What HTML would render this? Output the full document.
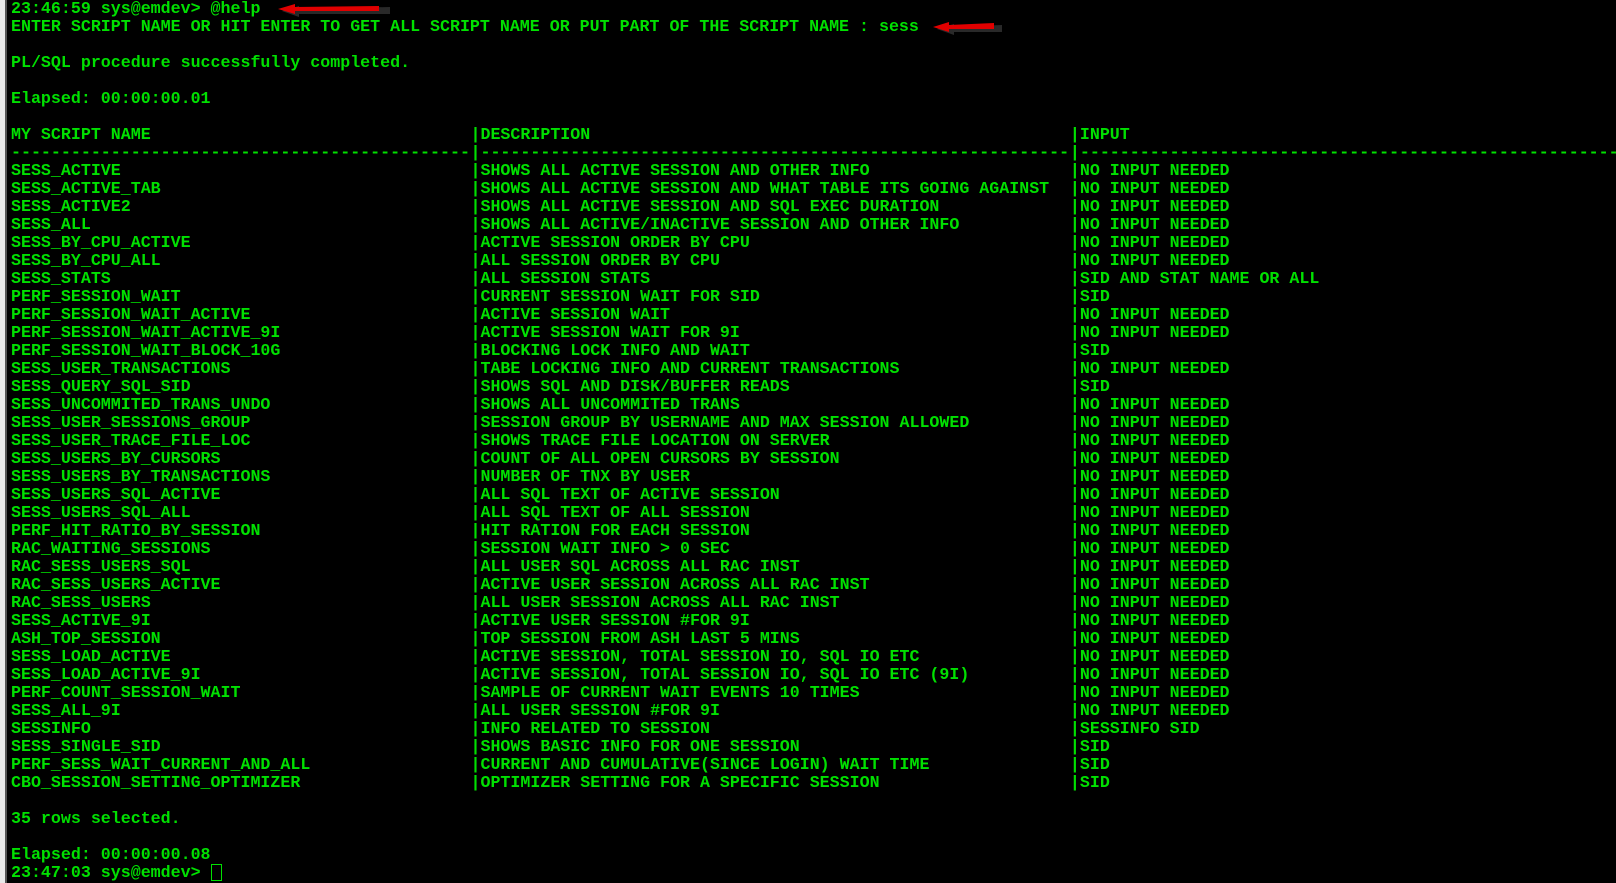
<!DOCTYPE html>
<html><head><meta charset="utf-8"><style>
html,body{margin:0;padding:0;background:#000;width:1616px;height:883px;overflow:hidden}
.strip{position:absolute;left:0;top:0;width:5px;height:883px;background:#e8e8e8}
.strip2{position:absolute;left:5px;top:0;width:2px;height:883px;background:#555}
.t{position:absolute;left:11px;top:0;width:1605px;font-family:"Liberation Mono",monospace;font-weight:bold;font-size:16.64px;line-height:18px;color:#00e000}
.l{position:relative;height:18px;white-space:pre}
.l span{position:absolute;top:0}
.a{left:0}.b{left:459.5px}.c{left:1058.9px}
</style></head><body>
<div class="strip"></div><div class="strip2"></div>
<div class="t" id="t"><div class="l">23:46:59 sys@emdev&gt; @help</div><div class="l">ENTER SCRIPT NAME OR HIT ENTER TO GET ALL SCRIPT NAME OR PUT PART OF THE SCRIPT NAME : sess</div><div class="l"></div><div class="l">PL/SQL procedure successfully completed.</div><div class="l"></div><div class="l">Elapsed: 00:00:00.01</div><div class="l"></div><div class="l"><span class="a">MY SCRIPT NAME</span><span class="b">|DESCRIPTION</span><span class="c">|INPUT</span></div><div class="l"><span class="a">----------------------------------------------</span><span class="b">|-----------------------------------------------------------</span><span class="c">|-----------------------------------------------------------</span></div><div class="l"><span class="a">SESS_ACTIVE</span><span class="b">|SHOWS ALL ACTIVE SESSION AND OTHER INFO</span><span class="c">|NO INPUT NEEDED</span></div><div class="l"><span class="a">SESS_ACTIVE_TAB</span><span class="b">|SHOWS ALL ACTIVE SESSION AND WHAT TABLE ITS GOING AGAINST</span><span class="c">|NO INPUT NEEDED</span></div><div class="l"><span class="a">SESS_ACTIVE2</span><span class="b">|SHOWS ALL ACTIVE SESSION AND SQL EXEC DURATION</span><span class="c">|NO INPUT NEEDED</span></div><div class="l"><span class="a">SESS_ALL</span><span class="b">|SHOWS ALL ACTIVE/INACTIVE SESSION AND OTHER INFO</span><span class="c">|NO INPUT NEEDED</span></div><div class="l"><span class="a">SESS_BY_CPU_ACTIVE</span><span class="b">|ACTIVE SESSION ORDER BY CPU</span><span class="c">|NO INPUT NEEDED</span></div><div class="l"><span class="a">SESS_BY_CPU_ALL</span><span class="b">|ALL SESSION ORDER BY CPU</span><span class="c">|NO INPUT NEEDED</span></div><div class="l"><span class="a">SESS_STATS</span><span class="b">|ALL SESSION STATS</span><span class="c">|SID AND STAT NAME OR ALL</span></div><div class="l"><span class="a">PERF_SESSION_WAIT</span><span class="b">|CURRENT SESSION WAIT FOR SID</span><span class="c">|SID</span></div><div class="l"><span class="a">PERF_SESSION_WAIT_ACTIVE</span><span class="b">|ACTIVE SESSION WAIT</span><span class="c">|NO INPUT NEEDED</span></div><div class="l"><span class="a">PERF_SESSION_WAIT_ACTIVE_9I</span><span class="b">|ACTIVE SESSION WAIT FOR 9I</span><span class="c">|NO INPUT NEEDED</span></div><div class="l"><span class="a">PERF_SESSION_WAIT_BLOCK_10G</span><span class="b">|BLOCKING LOCK INFO AND WAIT</span><span class="c">|SID</span></div><div class="l"><span class="a">SESS_USER_TRANSACTIONS</span><span class="b">|TABE LOCKING INFO AND CURRENT TRANSACTIONS</span><span class="c">|NO INPUT NEEDED</span></div><div class="l"><span class="a">SESS_QUERY_SQL_SID</span><span class="b">|SHOWS SQL AND DISK/BUFFER READS</span><span class="c">|SID</span></div><div class="l"><span class="a">SESS_UNCOMMITED_TRANS_UNDO</span><span class="b">|SHOWS ALL UNCOMMITED TRANS</span><span class="c">|NO INPUT NEEDED</span></div><div class="l"><span class="a">SESS_USER_SESSIONS_GROUP</span><span class="b">|SESSION GROUP BY USERNAME AND MAX SESSION ALLOWED</span><span class="c">|NO INPUT NEEDED</span></div><div class="l"><span class="a">SESS_USER_TRACE_FILE_LOC</span><span class="b">|SHOWS TRACE FILE LOCATION ON SERVER</span><span class="c">|NO INPUT NEEDED</span></div><div class="l"><span class="a">SESS_USERS_BY_CURSORS</span><span class="b">|COUNT OF ALL OPEN CURSORS BY SESSION</span><span class="c">|NO INPUT NEEDED</span></div><div class="l"><span class="a">SESS_USERS_BY_TRANSACTIONS</span><span class="b">|NUMBER OF TNX BY USER</span><span class="c">|NO INPUT NEEDED</span></div><div class="l"><span class="a">SESS_USERS_SQL_ACTIVE</span><span class="b">|ALL SQL TEXT OF ACTIVE SESSION</span><span class="c">|NO INPUT NEEDED</span></div><div class="l"><span class="a">SESS_USERS_SQL_ALL</span><span class="b">|ALL SQL TEXT OF ALL SESSION</span><span class="c">|NO INPUT NEEDED</span></div><div class="l"><span class="a">PERF_HIT_RATIO_BY_SESSION</span><span class="b">|HIT RATION FOR EACH SESSION</span><span class="c">|NO INPUT NEEDED</span></div><div class="l"><span class="a">RAC_WAITING_SESSIONS</span><span class="b">|SESSION WAIT INFO &gt; 0 SEC</span><span class="c">|NO INPUT NEEDED</span></div><div class="l"><span class="a">RAC_SESS_USERS_SQL</span><span class="b">|ALL USER SQL ACROSS ALL RAC INST</span><span class="c">|NO INPUT NEEDED</span></div><div class="l"><span class="a">RAC_SESS_USERS_ACTIVE</span><span class="b">|ACTIVE USER SESSION ACROSS ALL RAC INST</span><span class="c">|NO INPUT NEEDED</span></div><div class="l"><span class="a">RAC_SESS_USERS</span><span class="b">|ALL USER SESSION ACROSS ALL RAC INST</span><span class="c">|NO INPUT NEEDED</span></div><div class="l"><span class="a">SESS_ACTIVE_9I</span><span class="b">|ACTIVE USER SESSION #FOR 9I</span><span class="c">|NO INPUT NEEDED</span></div><div class="l"><span class="a">ASH_TOP_SESSION</span><span class="b">|TOP SESSION FROM ASH LAST 5 MINS</span><span class="c">|NO INPUT NEEDED</span></div><div class="l"><span class="a">SESS_LOAD_ACTIVE</span><span class="b">|ACTIVE SESSION, TOTAL SESSION IO, SQL IO ETC</span><span class="c">|NO INPUT NEEDED</span></div><div class="l"><span class="a">SESS_LOAD_ACTIVE_9I</span><span class="b">|ACTIVE SESSION, TOTAL SESSION IO, SQL IO ETC (9I)</span><span class="c">|NO INPUT NEEDED</span></div><div class="l"><span class="a">PERF_COUNT_SESSION_WAIT</span><span class="b">|SAMPLE OF CURRENT WAIT EVENTS 10 TIMES</span><span class="c">|NO INPUT NEEDED</span></div><div class="l"><span class="a">SESS_ALL_9I</span><span class="b">|ALL USER SESSION #FOR 9I</span><span class="c">|NO INPUT NEEDED</span></div><div class="l"><span class="a">SESSINFO</span><span class="b">|INFO RELATED TO SESSION</span><span class="c">|SESSINFO SID</span></div><div class="l"><span class="a">SESS_SINGLE_SID</span><span class="b">|SHOWS BASIC INFO FOR ONE SESSION</span><span class="c">|SID</span></div><div class="l"><span class="a">PERF_SESS_WAIT_CURRENT_AND_ALL</span><span class="b">|CURRENT AND CUMULATIVE(SINCE LOGIN) WAIT TIME</span><span class="c">|SID</span></div><div class="l"><span class="a">CBO_SESSION_SETTING_OPTIMIZER</span><span class="b">|OPTIMIZER SETTING FOR A SPECIFIC SESSION</span><span class="c">|SID</span></div><div class="l"></div><div class="l">35 rows selected.</div><div class="l"></div><div class="l">Elapsed: 00:00:00.08</div><div class="l">23:47:03 sys@emdev&gt; <i style="display:inline-block;width:11px;height:17px;border:1px solid #00e000;vertical-align:-4px;box-sizing:border-box"></i></div></div>
<svg style="position:absolute;left:0;top:0" width="1616" height="883">
<path d="M280 9 L297 4 L297 7 L388 5 L388 12 L297 12 L297 15 Z" fill="#444" opacity="0.6" transform="translate(2,2)"/>
<path d="M278 9 L295 4 L295 7 L379 6 L379 11 L295 11 L295 14 Z" fill="#e00000"/>
<path d="M935 27 L952 22 L952 25 L1000 23 L1000 30 L952 30 L952 33 Z" fill="#444" opacity="0.6" transform="translate(2,2)"/>
<path d="M933 27 L949 22 L949 25 L994 23 L994 29 L949 29 L949 32 Z" fill="#e00000"/>
</svg>
</body></html>
